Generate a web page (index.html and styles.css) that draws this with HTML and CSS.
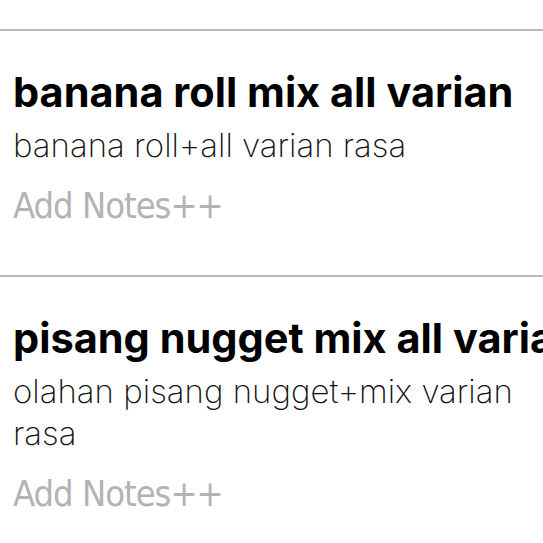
FILE: index.html
```html
<!DOCTYPE html>
<html>
<head>
    <title>Menu</title>
    <link rel="stylesheet" href="styles.css">
</head>
<body>
    <div class="menu-list">
        <div class="menu-item">
            <div class="item-name">banana roll mix all varian</div>
            <div class="item-desc">banana roll+all varian rasa</div>
            <div class="item-notes">Add Notes++</div>
        </div>

        <div class="menu-item">
            <div class="item-name">pisang nugget mix all varian</div>
            <div class="item-desc">olahan pisang nugget+mix varian rasa</div>
            <div class="item-notes">Add Notes++</div>
        </div>
    </div>
</body>
</html>
```
FILE: styles.css
```css
body {
    margin: 0;
    background: #ffffff;
    overflow: hidden;
}
.menu-list {
    padding-top: 29px;
}
.menu-item {
    border-top: 2px solid #bababa;
    padding: 36px 0 47px 13px;
    overflow: hidden;
}
.item-name {
    font-family: Inter, sans-serif;
    font-weight: 700;
    font-size: 41.5px;
    line-height: 50px;
    color: #000000;
    white-space: nowrap;
}
.item-desc {
    margin-top: 7px;
    padding-right: 10px;
    font-family: Inter, sans-serif;
    font-weight: 200;
    font-size: 33px;
    line-height: 42px;
    color: #111111;
}
.item-notes {
    margin-top: 18px;
    font-family: "DejaVu Sans Condensed", "DejaVu Sans", sans-serif;
    font-stretch: condensed;
    font-size: 36px;
    line-height: 44px;
    letter-spacing: -1px;
    color: #b3b3b3;
}
```
